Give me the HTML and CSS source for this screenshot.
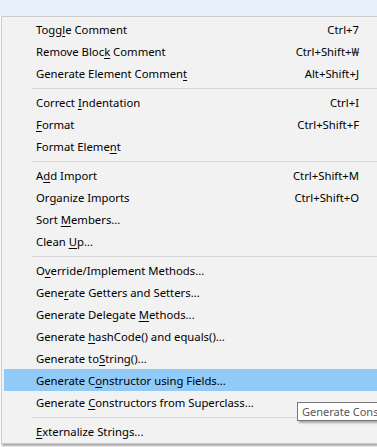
FILE: index.html
```html
<!DOCTYPE html>
<html lang="ko">
<head>
  <meta charset="UTF-8">
  <meta name="viewport" content="width=device-width, initial-scale=1.0">
  <title>Source Menu</title>
  <link rel="stylesheet" href="styles.css">
</head>
<body>
  <div class="top-strip"></div>
  <div class="menu">
    <div class="item"><span class="label">Togg<u>l</u>e Comment</span><span class="key">Ctrl+7</span></div>
    <div class="item"><span class="label">Remove Bloc<u>k</u> Comment</span><span class="key">Ctrl+Shift+₩</span></div>
    <div class="item"><span class="label">Generate Element Commen<u>t</u></span><span class="key">Alt+Shift+J</span></div>
    <div class="sep"></div>
    <div class="item"><span class="label">Correct <u>I</u>ndentation</span><span class="key">Ctrl+I</span></div>
    <div class="item"><span class="label"><u>F</u>ormat</span><span class="key">Ctrl+Shift+F</span></div>
    <div class="item"><span class="label">Format Eleme<u>n</u>t</span></div>
    <div class="sep"></div>
    <div class="item"><span class="label">A<u>d</u>d Import</span><span class="key">Ctrl+Shift+M</span></div>
    <div class="item"><span class="label">Or<u>g</u>anize Imports</span><span class="key">Ctrl+Shift+O</span></div>
    <div class="item"><span class="label">Sort <u>M</u>embers...</span></div>
    <div class="item"><span class="label">Clean <u>U</u>p...</span></div>
    <div class="sep"></div>
    <div class="item"><span class="label">O<u>v</u>erride/Implement Methods...</span></div>
    <div class="item"><span class="label">Gene<u>r</u>ate Getters and Setters...</span></div>
    <div class="item"><span class="label">Generate Delegate <u>M</u>ethods...</span></div>
    <div class="item"><span class="label">Generate <u>h</u>ashCode() and equals()...</span></div>
    <div class="item"><span class="label">Generate to<u>S</u>tring()...</span></div>
    <div class="item active"><span class="label">Generate C<u>o</u>nstructor using Fields...</span></div>
    <div class="item"><span class="label">Generate <u>C</u>onstructors from Superclass...</span></div>
    <div class="sep"></div>
    <div class="item"><span class="label"><u>E</u>xternalize Strings...</span></div>
  </div>
  <div class="tooltip">Generate Cons</div>
</body>
</html>
```

FILE: styles.css
```css
html, body { margin: 0; height: 100%; overflow: hidden; }
body { background: #fff; font-family: "Noto Sans", "Noto Sans CJK KR", sans-serif; font-size: 11.3px; color: #000; position: relative; }
.top-strip { height: 16px; background: #e8f1fb; }
.menu { margin-left: 1px; background: #f2f2f2; border: 1px solid #cccccc; border-right: none; padding: 1px 0 1px 2px; box-shadow: 1px 2px 2px rgba(0,0,0,0.35); }
.item { display: flex; align-items: center; height: 22px; padding-left: 32px; white-space: nowrap; }
.item .label { flex: 1; }
.item .key { text-align: right; margin-right: 18px; }
.item u { text-underline-offset: 2px; }
.item.active { background: #91c9f7; }
.sep { height: 1px; background: #d7d7d7; margin: 4px 0 2px 28px; }
.tooltip { position: absolute; left: 297px; right: 0; top: 402px; height: 17px; line-height: 17px; padding: 0 0 0 4px; background: #fff; border: 1px solid #767676; border-right: none; color: #575757; font-size: 11px; white-space: nowrap; box-shadow: 2px 2px 2px rgba(0,0,0,0.3); }
```
